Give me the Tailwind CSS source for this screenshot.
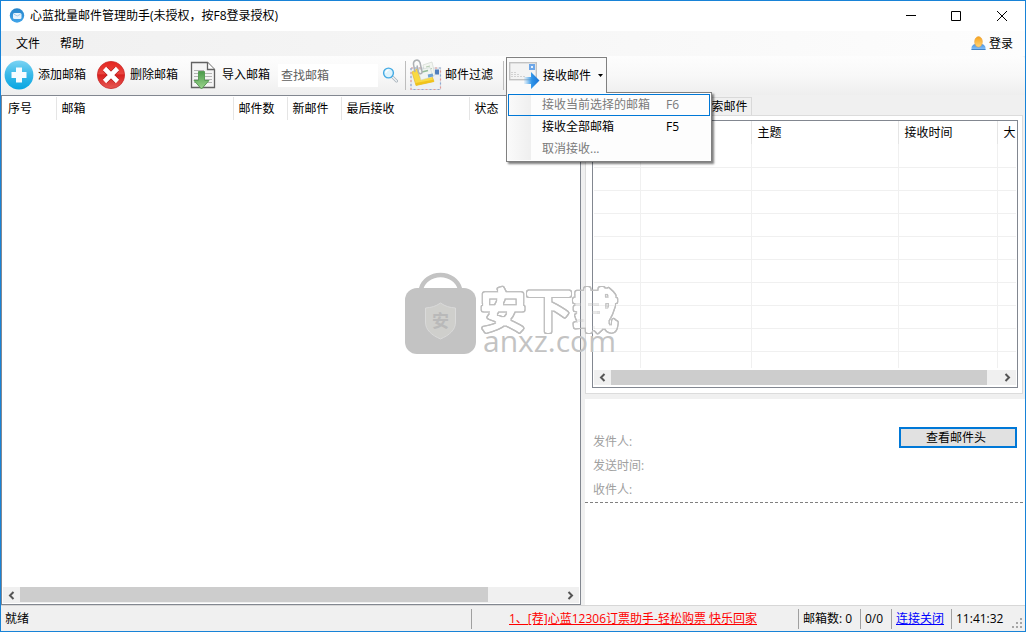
<!DOCTYPE html>
<html lang="zh-CN">
<head>
<meta charset="utf-8">
<title>心蓝批量邮件管理助手</title>
<script src="https://cdn.jsdelivr.net/npm/@tailwindcss/browser@4"></script>
</head>
<body class="font-['Open_Sans','Noto_Sans_CJK_SC',sans-serif] text-[12px] leading-4 text-black">
<div class="relative flex h-screen flex-col overflow-hidden border border-[#1883d7] bg-[#f0f0f0]">

  <!-- Title bar -->
  <header class="flex h-[30px] shrink-0 items-center bg-white pl-2">
    <svg class="size-4" viewBox="0 0 16 16"><defs><linearGradient id="app" x1="0" y1="0" x2="0" y2="1"><stop offset="0" stop-color="#2583c9"/><stop offset="1" stop-color="#41a5ea"/></linearGradient></defs><circle cx="8" cy="7.500" r="7.200" fill="url(#app)"/><rect x="4" y="5" width="8.500" height="6" rx="1.500" fill="#e6f2fc"/><path d="M5 6.200 8.200 8l3.300-1.800" fill="none" stroke="#8fbfe6" stroke-width=".8"/></svg>
    <h1 class="ml-[5px]">心蓝批量邮件管理助手(未授权，按F8登录授权)</h1>
    <div class="ml-auto flex">
      <button aria-label="最小化" class="flex h-7 w-[46px] items-center justify-center"><svg class="size-[11px]" viewBox="0 0 11 11"><path d="M1 4.500h10" stroke="#000"/></svg></button>
      <button aria-label="最大化" class="flex h-7 w-[46px] items-center justify-center"><svg class="size-[11px]" viewBox="0 0 11 11"><path d="M.5.5h9v9h-9z" fill="none" stroke="#000"/></svg></button>
      <button aria-label="关闭" class="flex h-7 w-[46px] items-center justify-center"><svg class="size-[11px]" viewBox="0 0 11 11"><path d="m0 0 10 10m0-10L0 10" stroke="#000"/></svg></button>
    </div>
  </header>

  <!-- Menu bar -->
  <nav class="flex h-[25px] shrink-0 items-center bg-linear-to-r from-[#f0f0f0] to-[#fdfdfd] pr-3 pl-[15px]">
    <button>文件</button>
    <button class="ml-5">帮助</button>
    <button class="ml-auto flex items-center gap-[3px]">
      <svg class="size-[15px]" viewBox="0 0 15 15"><defs><linearGradient id="u1" x1="0" y1="0" x2="0" y2="1"><stop offset="0" stop-color="#f6a21c"/><stop offset="1" stop-color="#ffd67c"/></linearGradient><linearGradient id="u2" x1="0" y1="0" x2="0" y2="1"><stop offset="0" stop-color="#4b93e0"/><stop offset="1" stop-color="#8cc6fb"/></linearGradient></defs><path d="M.5 14v-2C.5 9.500 3 8 5 8h5c2 0 4.500 1.500 4.500 4v2z" fill="url(#u2)"/><path d="M.5 13.500h14" stroke="#4483c6"/><ellipse cx="7.500" cy="5.800" rx="3.900" ry="5.300" fill="url(#u1)" stroke="#e6a040" stroke-width=".5"/></svg>
      登录
    </button>
  </nav>

  <!-- Tool bar -->
  <div class="relative z-10 flex h-[39px] shrink-0 items-center rounded-tr bg-linear-to-b from-[#fdfdfd] via-[#f8f8f8] to-[#eeeeee] pb-px pl-[3px]">
    <button class="flex items-center gap-1">
      <svg class="size-[30px]" viewBox="0 0 30 30"><defs><linearGradient id="add" x1="0" y1="0" x2="0" y2="1"><stop offset="0" stop-color="#7ad3f3"/><stop offset=".5" stop-color="#38b8e8"/><stop offset="1" stop-color="#08a6e2"/></linearGradient></defs><circle cx="15" cy="15" r="14.400" fill="url(#add)"/><path d="M12 7.500h6V12h4.500v6H18v4.500h-6V18H7.500v-6H12z" fill="#f7fcff"/></svg>
      添加邮箱
    </button>
    <button class="ml-[10px] flex items-center gap-1">
      <svg class="size-[30px]" viewBox="0 0 30 30"><defs><linearGradient id="del" x1="0" y1="0" x2="0" y2="1"><stop offset="0" stop-color="#e5251f"/><stop offset=".45" stop-color="#e8453f"/><stop offset=".5" stop-color="#d8201e"/><stop offset="1" stop-color="#e65a55"/></linearGradient></defs><circle cx="15" cy="15" r="13.600" fill="url(#del)" stroke="#c92b2b" stroke-width=".8"/><path d="m9 9 12 12M21 9 9 21" stroke="#a81715" stroke-width="6"/><path d="m8.500 8.500 13 13m0-13-13 13" stroke="#fff" stroke-width="4.600"/></svg>
      删除邮箱
    </button>
    <button class="ml-[10px] flex items-center gap-1">
      <svg class="size-[30px]" viewBox="0 0 30 30"><defs><linearGradient id="imp" x1="0" y1="0" x2="0" y2="1"><stop offset="0" stop-color="#4b9a4a"/><stop offset="1" stop-color="#9cd68d"/></linearGradient></defs><path d="M3.500 2.500h16l7 7v18h-23z" fill="#f5f5f5" stroke="#626262" stroke-width="1.300"/><path d="M19.500 2.500v7h7" fill="#fff" stroke="#626262" stroke-width="1.300"/><path d="M6 10.500h10M6 13.500h18M6 16.500h18M6 19.500h18M6 22.500h18" stroke="#b5b5b5"/><path d="M10.500 11.500h6v9h4.500l-7.500 8.500-7.500-8.500h4.500z" fill="url(#imp)" stroke="#5b9c58"/></svg>
      导入邮箱
    </button>
    <input type="text" placeholder="查找邮箱" aria-label="查找邮箱" class="ml-2 h-[23px] w-[100px] bg-white px-[3px] outline-none placeholder:text-[#606060]">
    <button aria-label="查找" class="ml-1"><svg class="size-4" viewBox="0 0 16 16"><path d="m10.500 10 4 4" stroke="#a7b0b8" stroke-width="3" stroke-linecap="round"/><path d="m10.500 10 4 4" stroke="#eef2f5" stroke-width="1.600" stroke-linecap="round"/><circle cx="6.500" cy="6" r="4.900" fill="#dff4fd" stroke="#45abe4" stroke-width="1.400"/><path d="M3.800 6a2.800 2.800 0 0 1 2.800-2.800" fill="none" stroke="#fff" stroke-width="1.200"/></svg></button>
    <div class="ml-[7px] h-[29px] w-px bg-[#bdbdbd]"></div>
    <button class="ml-[3px] flex items-center gap-[3px]">
      <svg class="h-8 w-[33px]" viewBox="0 0 33 32"><path d="M2 9h29.500v21.500H2z" fill="#edf0f4" stroke="#d6dae0"/><path d="M2 9h29.500v21.500H2z" fill="none" stroke="#e29a98" stroke-width="1.200" stroke-dasharray="2 6"/><path d="M2 9h29.500v21.500H2z" fill="none" stroke="#90a9d2" stroke-width="1.200" stroke-dasharray="2 6" stroke-dashoffset="-4"/><path d="M26 10.500h4v5h-4z" fill="#4f7fbe"/><path d="m14 6 9-3 3 13-9 3z" fill="#f3f6f1" stroke="#d3dad2" stroke-width=".7"/><path d="m17 8 4-1m-3 4 5-1.500" stroke="#b4cbb2"/><path d="m3 13 5-3 3 9 12-2 2 5.500L7 26.500z" fill="#f9da43" stroke="#e2b92f" stroke-width=".7"/><path d="m9 11 12-2.500 3 9L12 21z" fill="#f0f5f2" stroke="#ccd6d2" stroke-width=".6"/><path d="m13 13 6-1.500" stroke="#93bd98" stroke-width="1.500"/><path d="m19 17 5-1" stroke="#6fa2d1" stroke-width="3"/><path d="m7 26.500 18-3.800-.7-2L6.500 24z" fill="#f0c31c"/><path d="M6 13 4.500 5.500c-.5-4.500 5-6 6.500-2l2 9c.5 2.500-2.800 3.200-3.500.8L8 6.500" fill="none" stroke="#adb1b5" stroke-width="1.500"/></svg>
      邮件过滤
    </button>
    <div class="ml-[10px] h-[29px] w-px bg-[#bdbdbd]"></div>

    <div class="relative ml-[2px] h-9 self-start pt-px">
      <button aria-haspopup="menu" aria-expanded="true" class="relative z-10 flex h-9 w-[101px] items-center border border-b-0 border-[#808080] bg-[#fafafa] pl-[2px]">
        <svg class="h-[30px] w-[31px]" viewBox="0 0 31 30"><defs><linearGradient id="rcv" x1="0" y1="0" x2="1" y2="0"><stop offset="0" stop-color="#4fa9ee" stop-opacity=".1"/><stop offset=".5" stop-color="#2f94e8"/><stop offset="1" stop-color="#1a74d6"/></linearGradient></defs><rect x=".7" y="1.700" width="26.600" height="17" fill="#f3f3f3" stroke="#c2c2c2" stroke-width="1.400"/><rect x="20" y="3" width="6" height="6" fill="#6ea7e8"/><path d="M22 5h2v2h-2z" fill="#e8f2fd"/><path d="M2 11.500h5m-5 2h8m-8 2h14" stroke="#d2d2d2" stroke-dasharray="2 1"/><path d="M15 16h7v-5l8.500 8.500L22 28v-5h-7z" fill="url(#rcv)"/></svg>
        <span class="ml-[3px]">接收邮件</span>
        <svg class="ml-[7px] h-[3px] w-[5px]" viewBox="0 0 5 3"><path d="M0 0h5L2.500 3z" fill="#000"/></svg>
      </button>
      <div role="menu" class="absolute top-9 left-0 w-[206px] border border-[#808080] bg-[#fdfdfd] p-px shadow-[2px_2px_2px_rgba(0,0,0,0.5)]">
        <div class="bg-linear-to-r from-[#fafafa] to-[#efefef] to-[23px]">
          <button role="menuitem" class="flex h-[22px] w-full items-center border border-[#0078d7] pl-[22px] text-left text-[#7a7a7a]"><span class="flex h-full w-full items-center bg-[#fdfdfd] pl-[11px]"><span class="w-[124px]">接收当前选择的邮箱</span>F6</span></button>
          <button role="menuitem" class="flex h-[22px] w-full items-center pl-[23px] text-left"><span class="flex h-full w-full items-center bg-[#fdfdfd] pl-[11px]"><span class="w-[124px]">接收全部邮箱</span>F5</span></button>
          <button role="menuitem" class="flex h-[22px] w-full items-center pl-[23px] text-left text-[#7a7a7a]"><span class="flex h-full w-full items-center bg-[#fdfdfd] pl-[11px]">取消接收...</span></button>
        </div>
      </div>
    </div>
  </div>

  <main class="flex min-h-0 flex-1">
    <!-- Mailbox list -->
    <section class="flex w-[580px] shrink-0 flex-col border border-[#828790] bg-white p-px">
      <table class="w-full table-fixed border-collapse text-left">
        <thead><tr class="h-[23px] *:border-r *:border-[#e5e5e5] *:p-0 *:pl-[5px] *:font-normal">
          <th class="w-[53px]">序号</th><th class="w-[177px]">邮箱</th><th class="w-[54px]">邮件数</th><th class="w-[54px]">新邮件</th><th class="w-[128px]">最后接收</th><th>状态</th>
        </tr></thead>
      </table>
      <div class="mt-auto flex h-4 items-stretch">
        <button aria-label="向左滚动" class="flex w-[17px] items-center justify-center bg-[#f0f0f0]"><svg class="size-[9px]" viewBox="0 0 9 9"><path d="M6.500 1 3 4.500 6.500 8" fill="none" stroke="#555" stroke-width="2"/></svg></button>
        <div class="flex-1 bg-[#f0f0f0]"><div class="h-[15px] w-[468px] bg-[#cdcdcd]"></div></div>
        <button aria-label="向右滚动" class="flex w-[17px] items-center justify-center bg-[#f0f0f0]"><svg class="size-[9px]" viewBox="0 0 9 9"><path d="M2.500 1 6 4.500 2.500 8" fill="none" stroke="#555" stroke-width="2"/></svg></button>
      </div>
    </section>

    <div class="ml-1 flex min-w-0 flex-1 flex-col">
      <!-- Message tabs -->
      <div class="flex h-5 shrink-0 items-end">
        <button class="ml-[110px] h-[18px] w-[57px] border border-b-0 border-[#d9d9d9] bg-[#f0f0f0]">搜索邮件</button>
      </div>
      <section class="mr-[2px] flex h-[279px] shrink-0 border border-[#dcdcdc] bg-white pt-1 pr-[4px] pb-[5px] pl-[6px]">
        <div class="flex min-w-0 flex-1 flex-col overflow-hidden border border-[#828790] px-px pb-px">
          <table class="w-full table-fixed border-collapse text-left">
            <thead><tr class="h-[23px] *:overflow-hidden *:border-r *:border-[#e5e5e5] *:p-0 *:pl-[6px] *:font-normal *:whitespace-nowrap">
              <th class="w-[46px]"></th><th class="w-[111px]"></th><th class="w-[147px]">主题</th><th class="w-[99px]">接收时间</th><th class="border-r-0!">大</th>
            </tr></thead>
            <tbody class="[&_td]:h-[23px] [&_td]:border-r [&_td]:border-b [&_td]:border-[#f0f0f0] [&_td]:p-0 [&_td:last-child]:border-r-0">
              <tr><td></td><td></td><td></td><td></td><td></td></tr>
              <tr><td></td><td></td><td></td><td></td><td></td></tr>
              <tr><td></td><td></td><td></td><td></td><td></td></tr>
              <tr><td></td><td></td><td></td><td></td><td></td></tr>
              <tr><td></td><td></td><td></td><td></td><td></td></tr>
              <tr><td></td><td></td><td></td><td></td><td></td></tr>
              <tr><td></td><td></td><td></td><td></td><td></td></tr>
              <tr><td></td><td></td><td></td><td></td><td></td></tr>
              <tr><td></td><td></td><td></td><td></td><td></td></tr>
              <tr class="[&_td]:h-[17px]! [&_td]:border-b-0!"><td></td><td></td><td></td><td></td><td></td></tr>
            </tbody>
          </table>
          <div class="mt-auto flex h-4 shrink-0 items-stretch">
            <button aria-label="向左滚动" class="flex h-[15px] w-[17px] items-center justify-center bg-[#f0f0f0]"><svg class="size-[9px]" viewBox="0 0 9 9"><path d="M6.500 1 3 4.500 6.500 8" fill="none" stroke="#555" stroke-width="2"/></svg></button>
            <div class="h-[15px] flex-1 bg-[#f0f0f0]"><div class="h-[15px] w-[97%] bg-[#cdcdcd]"></div></div>
            <button aria-label="向右滚动" class="flex h-[15px] w-[17px] items-center justify-center bg-[#f0f0f0]"><svg class="size-[9px]" viewBox="0 0 9 9"><path d="M2.500 1 6 4.500 2.500 8" fill="none" stroke="#555" stroke-width="2"/></svg></button>
          </div>
        </div>
      </section>

      <!-- Message preview -->
      <section class="mt-[5px] flex-1 bg-white">
        <div class="mr-[2px] flex items-start justify-between border-b border-dashed border-[#808080] pt-7 pr-[6px] pb-0 pl-2">
          <dl class="pt-[3px] leading-6 text-[#a0a0a0]"><dt>发件人:</dt><dt>发送时间:</dt><dt>收件人:</dt></dl>
          <button class="flex h-[21px] w-[118px] items-center justify-center border-2 border-[#0078d7] bg-[#e1e1e1] pr-1">查看邮件头</button>
        </div>
      </section>
    </div>
  </main>

  <!-- Status bar -->
  <footer class="relative flex h-[26px] shrink-0 items-center border-t border-[#d7d7d7] *:h-5 *:leading-5">
    <span class="w-[471px] border-r border-[#a0a0a0] pl-1">就绪</span>
    <span class="flex-1 pr-1 text-center"><a href="#" class="text-[#ff0000] underline">1、[荐]心蓝12306订票助手-轻松购票 快乐回家</a></span>
    <span class="w-[62px] border-l border-[#a0a0a0] pl-1 whitespace-nowrap">邮箱数: 0</span>
    <span class="w-[31px] border-l border-[#a0a0a0] pl-1">0/0</span>
    <span class="w-[60px] border-l border-[#a0a0a0] pl-1"><a href="#" class="text-[#0000ff] underline">连接关闭</a></span>
    <span class="w-[74px] border-l border-[#a0a0a0] pl-1">11:41:32</span>
    <svg class="absolute right-[2px] bottom-[2px] size-[11px]!" viewBox="0 0 11 11"><path d="M8 0h2v2H8zM4 4h2v2H4zm4 0h2v2H8zM0 8h2v2H0zm4 0h2v2H4zm4 0h2v2H8z" fill="#a6a6a6"/></svg>
  </footer>

  <!-- Watermark -->
  <svg class="pointer-events-none absolute top-[268px] left-[401px] h-[92px] w-[222px]" viewBox="0 0 222 92">
    <defs><filter id="outline" x="-10%" y="-20%" width="120%" height="140%"><feMorphology in="SourceAlpha" operator="erode" radius="1" result="inner"/><feComposite in="SourceGraphic" in2="inner" operator="out" result="line"/><feMerge><feMergeNode in="line"/><feMergeNode in="line"/></feMerge></filter></defs>
    <path d="M19 20a20 18 0 0 1 39 0" fill="none" stroke="#c3c3c3" stroke-width="4.500"/>
    <rect x="3" y="19" width="71" height="66" rx="12" fill="#c3c3c3"/>
    <path d="M38.500 34c5 3.500 9 4.500 15 5v14c0 8-6 13-15 17-9-4-15-9-15-17V39c6-.5 10-1.500 15-5z" fill="#cfcfcc" stroke="#dadada"/>
    <text x="38.500" y="58" text-anchor="middle" font-family="Noto Sans CJK SC" font-weight="700" font-size="17" fill="#b9b9b9">安</text>
    <text x="78" y="58" font-family="Noto Sans CJK SC" font-weight="400" font-size="46" fill="#bdbdbd" stroke="#bdbdbd" stroke-width="5" stroke-linejoin="round" filter="url(#outline)">安下载</text>
    <text x="81" y="83" font-family="Open Sans" font-weight="500" font-size="30" fill="#c3c3c3">anxz.com</text>
  </svg>
</div>
</body>
</html>
